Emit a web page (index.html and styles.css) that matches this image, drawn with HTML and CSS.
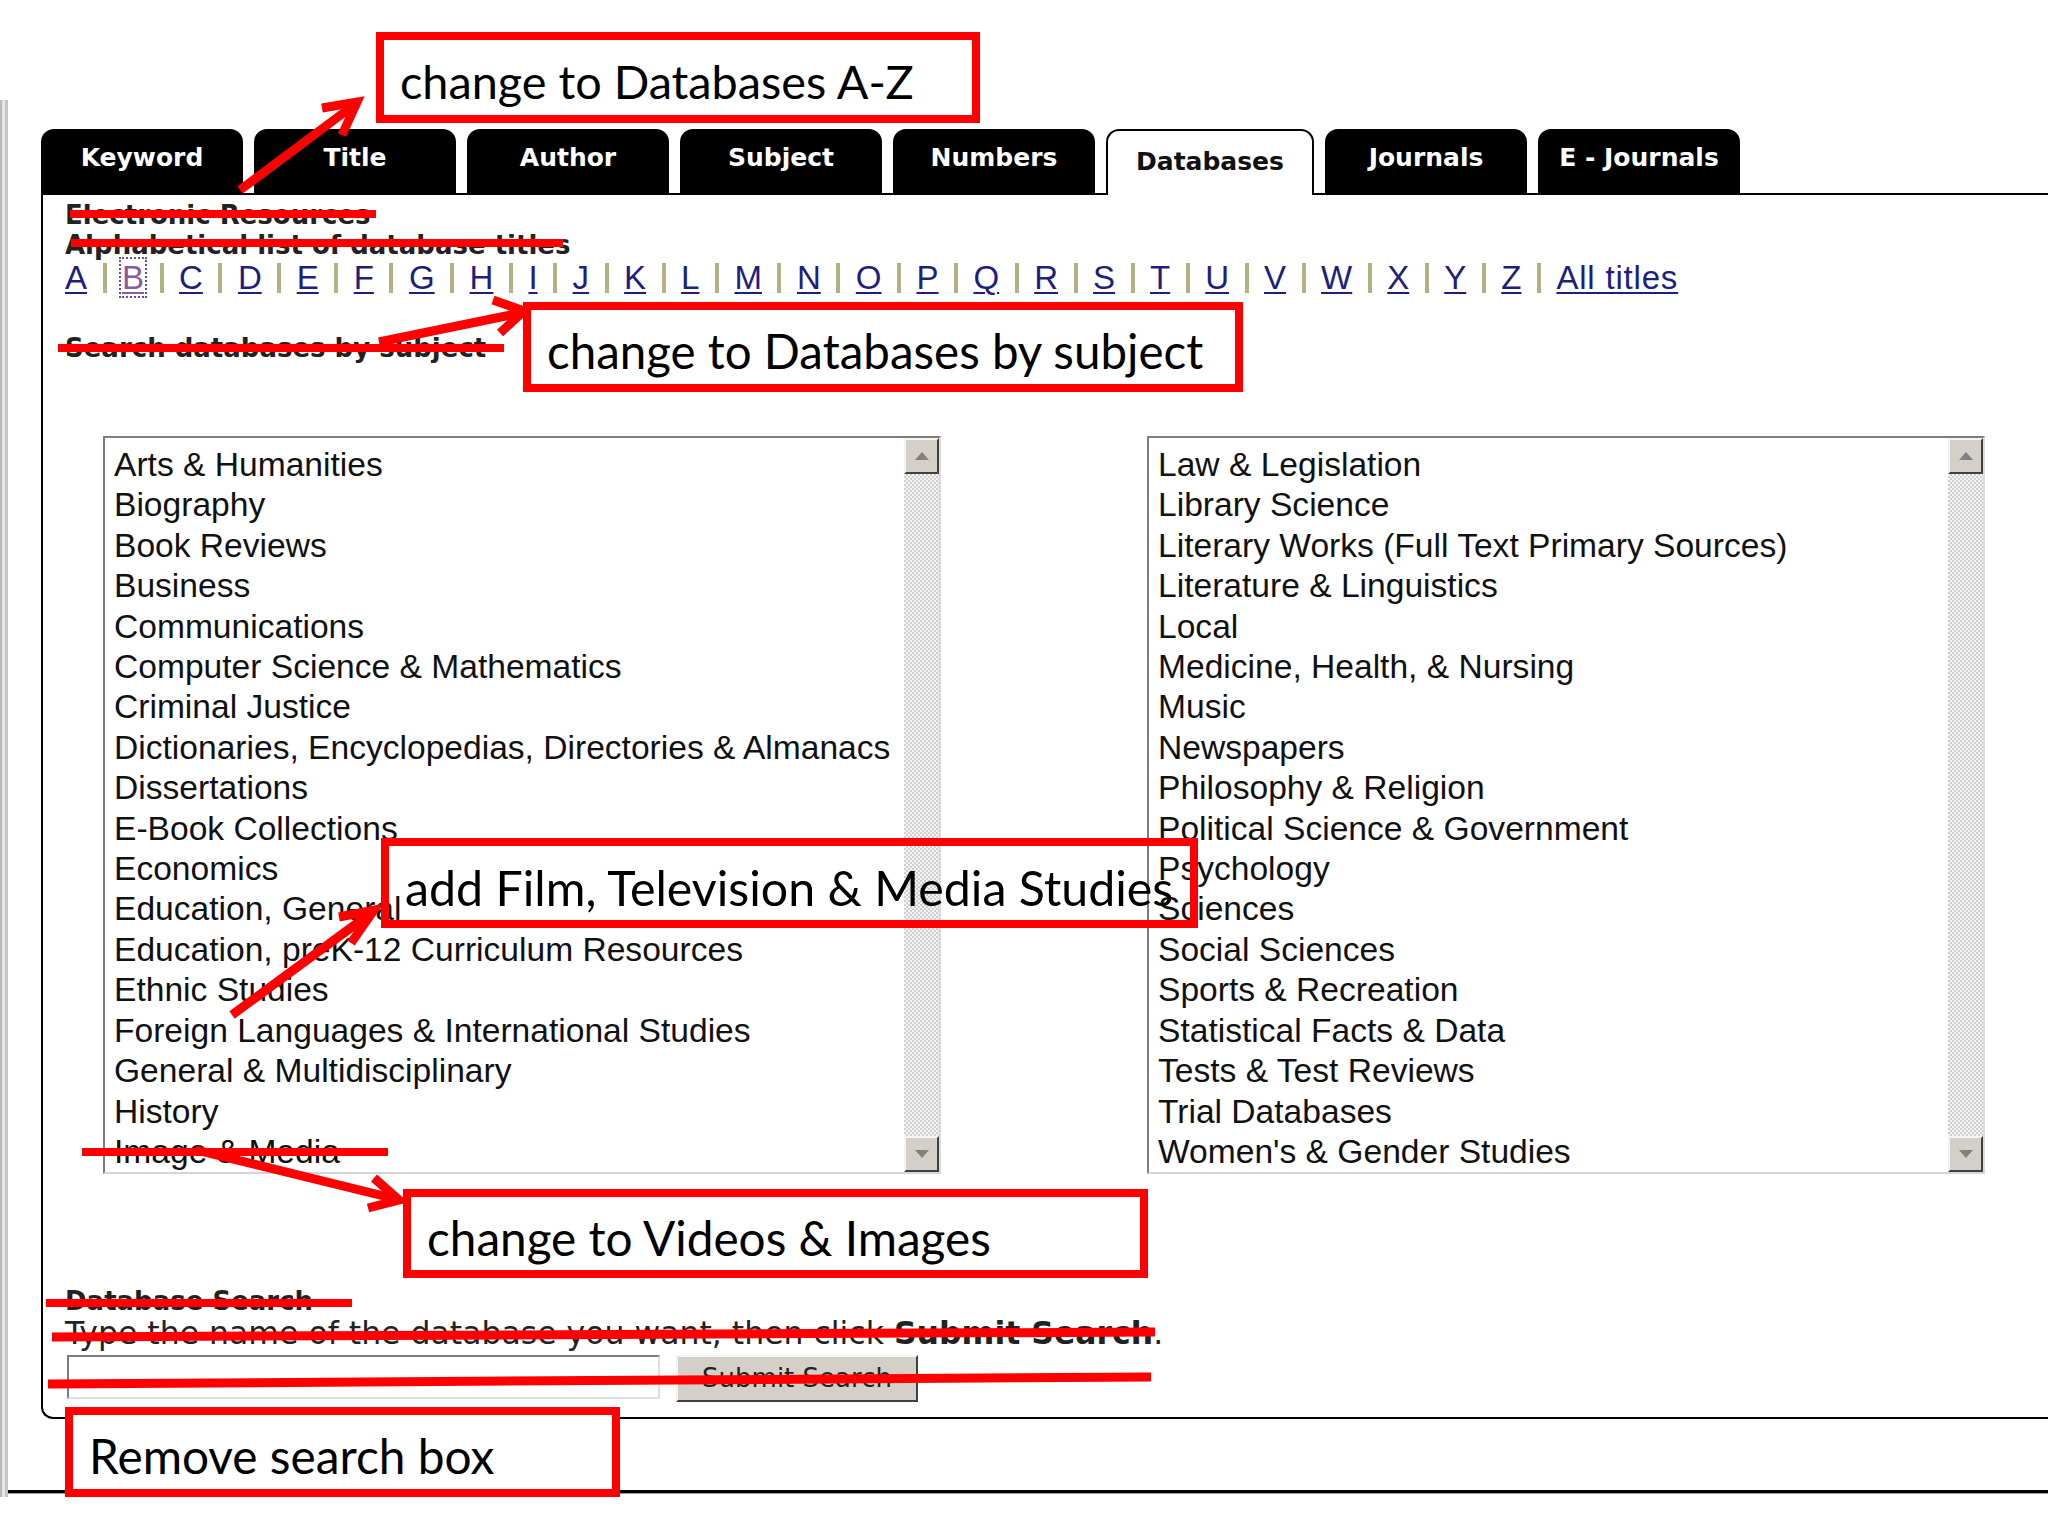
FILE: index.html
```html
<!DOCTYPE html>
<html>
<head>
<meta charset="utf-8">
<link rel="stylesheet" href="styles.css">
</head>
<body>
<div class="page">
  <div class="leftbar"></div>
  <div class="main">
    <div class="tabs">
      <div class="tab">Keyword</div>
      <div class="tab">Title</div>
      <div class="tab">Author</div>
      <div class="tab">Subject</div>
      <div class="tab">Numbers</div>
      <div class="tab active">Databases</div>
      <div class="tab">Journals</div>
      <div class="tab">E - Journals</div>
    </div>
    <div class="panel">
      <div class="hd">Electronic Resources</div>
      <div class="hd">Alphabetical list of database titles</div>
      <div class="letters">
        <a>A</a><span class="sep"></span><a class="visited">B</a><span class="sep"></span><a>C</a><span class="sep"></span><a>D</a><span class="sep"></span><a>E</a><span class="sep"></span><a>F</a><span class="sep"></span><a>G</a><span class="sep"></span><a>H</a><span class="sep"></span><a>I</a><span class="sep"></span><a>J</a><span class="sep"></span><a>K</a><span class="sep"></span><a>L</a><span class="sep"></span><a>M</a><span class="sep"></span><a>N</a><span class="sep"></span><a>O</a><span class="sep"></span><a>P</a><span class="sep"></span><a>Q</a><span class="sep"></span><a>R</a><span class="sep"></span><a>S</a><span class="sep"></span><a>T</a><span class="sep"></span><a>U</a><span class="sep"></span><a>V</a><span class="sep"></span><a>W</a><span class="sep"></span><a>X</a><span class="sep"></span><a>Y</a><span class="sep"></span><a>Z</a><span class="sep"></span><a class="all">All titles</a>
      </div>
      <div class="hd subj">Search databases by subject</div>
      <div class="lists">
        <div class="listbox">
          <ul class="items">
            <li>Arts &amp; Humanities</li>
            <li>Biography</li>
            <li>Book Reviews</li>
            <li>Business</li>
            <li>Communications</li>
            <li>Computer Science &amp; Mathematics</li>
            <li>Criminal Justice</li>
            <li>Dictionaries, Encyclopedias, Directories &amp; Almanacs</li>
            <li>Dissertations</li>
            <li>E-Book Collections</li>
            <li>Economics</li>
            <li>Education, General</li>
            <li>Education, preK-12 Curriculum Resources</li>
            <li>Ethnic Studies</li>
            <li>Foreign Languages &amp; International Studies</li>
            <li>General &amp; Multidisciplinary</li>
            <li>History</li>
            <li>Image &amp; Media</li>
          </ul>
          <div class="scroll">
            <div class="sbtn"><span class="tri up"></span></div>
            <div class="track"></div>
            <div class="sbtn"><span class="tri down"></span></div>
          </div>
        </div>
        <div class="listbox">
          <ul class="items">
            <li>Law &amp; Legislation</li>
            <li>Library Science</li>
            <li>Literary Works (Full Text Primary Sources)</li>
            <li>Literature &amp; Linguistics</li>
            <li>Local</li>
            <li>Medicine, Health, &amp; Nursing</li>
            <li>Music</li>
            <li>Newspapers</li>
            <li>Philosophy &amp; Religion</li>
            <li>Political Science &amp; Government</li>
            <li>Psychology</li>
            <li>Sciences</li>
            <li>Social Sciences</li>
            <li>Sports &amp; Recreation</li>
            <li>Statistical Facts &amp; Data</li>
            <li>Tests &amp; Test Reviews</li>
            <li>Trial Databases</li>
            <li>Women's &amp; Gender Studies</li>
          </ul>
          <div class="scroll">
            <div class="sbtn"><span class="tri up"></span></div>
            <div class="track"></div>
            <div class="sbtn"><span class="tri down"></span></div>
          </div>
        </div>
      </div>
      <div class="hd dbs">Database Search</div>
      <div class="instr">Type the name of the database you want, then click <b>Submit Search</b>.</div>
      <div class="searchrow">
        <div class="input"></div>
        <div class="btn">Submit Search</div>
      </div>
    </div>
    <div class="bottomrule"></div>
  </div>

  <svg class="marks" width="2048" height="1536" viewBox="0 0 2048 1536">
    <g stroke="#ff0000" stroke-width="8" fill="none">
      <line x1="70" y1="214" x2="376" y2="214"/>
      <line x1="71" y1="243" x2="563" y2="243"/>
      <line x1="58" y1="348" x2="504" y2="348"/>
      <line x1="82" y1="1152" x2="388" y2="1152"/>
      <line x1="46" y1="1303" x2="352" y2="1303"/>
      <line x1="52" y1="1337" x2="1155" y2="1332" stroke-width="9"/>
      <line x1="48" y1="1384" x2="1151" y2="1377" stroke-width="9"/>
    </g>
    <g stroke="#ff0000" stroke-width="9" fill="none" stroke-linejoin="miter">
      <line x1="240" y1="190" x2="354" y2="105"/>
      <polyline points="322,108 357,102 342,135"/>
      <line x1="379" y1="342" x2="520" y2="313"/>
      <polyline points="493,300 524,311 500,333"/>
      <line x1="232" y1="1015" x2="371" y2="913"/>
      <polyline points="339,917 374,910 351,943"/>
      <line x1="196" y1="1150" x2="396" y2="1199"/>
      <polyline points="374,1178 399,1200 368,1208"/>
    </g>
  </svg>

  <div class="note n1">change to Databases A-Z</div>
  <div class="note n2">change to Databases by subject</div>
  <div class="note n3">add Film, Television &amp; Media Studies</div>
  <div class="note n4">change to Videos &amp; Images</div>
  <div class="note n5">Remove search box</div>
</div>
</body>
</html>
```

FILE: styles.css
```css
* { box-sizing: border-box; }
body { margin: 0; background: #fff; }

.page {
  position: relative;
  width: 2048px;
  height: 1536px;
  display: flex;
  overflow: hidden;
  background: #fff;
  font-family: "Liberation Sans", Arial, sans-serif;
}

.leftbar {
  flex: none;
  width: 8px;
  height: 1397px;
  margin-top: 100px;
  background: linear-gradient(to right, #b9b9b9 0 2px, #e6e6e6 2px 5px, #c6c6c6 5px 8px);
}

.main {
  flex: 1;
  margin-left: 33px;
  padding-top: 129px;
  display: flex;
  flex-direction: column;
}

/* tabs */
.tabs {
  display: flex;
  gap: 11px;
  height: 64px;
  align-items: stretch;
}
.tab {
  width: 202px;
  background: #000;
  color: #fff;
  border-radius: 13px 13px 0 0;
  font: bold 25px "DejaVu Sans", Verdana, sans-serif;
  display: flex;
  align-items: center;
  justify-content: center;
  padding-bottom: 8px;
}
.tab.active {
  width: 208px;
  background: #fff;
  color: #111;
  border: 2px solid #000;
  border-bottom: none;
  margin-bottom: -2px;
  position: relative;
  z-index: 1;
  padding-bottom: 4px;
}

/* panel */
.panel {
  border-top: 2px solid #000;
  border-left: 2px solid #000;
  border-bottom: 2px solid #000;
  border-bottom-left-radius: 12px;
  padding: 5px 0 15px 22px;
}
.hd {
  font: bold 26px/30px "DejaVu Sans", Verdana, sans-serif;
  color: #222;
  white-space: nowrap;
}
.letters {
  display: flex;
  align-items: center;
  height: 35px;
  font: 33px/35px "Liberation Sans", Arial, sans-serif;
  white-space: nowrap;
}
.letters a {
  color: #1e1e7e;
  text-decoration: underline;
  text-decoration-thickness: 2px;
  text-underline-offset: 3px;
}
.letters a.visited {
  color: #8a5a9c;
  outline: 2px dotted #7a4a90;
  outline-offset: 1px;
}
.letters a.all { letter-spacing: 0.8px; }
.sep {
  flex: none;
  width: 4px;
  height: 30px;
  background: #b2b184;
  margin: 0 15.5px;
}
.subj { margin-top: 38px; }

/* list boxes */
.lists {
  display: flex;
  gap: 206px;
  margin-top: 73px;
  margin-left: 38px;
}
.listbox {
  width: 838px;
  height: 738px;
  display: flex;
  background: #fff;
  border: 2px solid;
  border-color: #7d7d7d #dcdcdc #d6d6d6 #7d7d7d;
}
.items {
  flex: 1;
  list-style: none;
  margin: 0;
  padding: 7px 0 0 9px;
  font: 33.6px/40.4px "Liberation Sans", Arial, sans-serif;
  color: #111;
  white-space: nowrap;
}
.scroll {
  width: 35px;
  display: flex;
  flex-direction: column;
}
.track {
  flex: 1;
  background: repeating-conic-gradient(#cfcfcf 0 25%, #f4f4f4 0 50%) 0 0 / 4px 4px;
}
.sbtn {
  height: 36px;
  background: #d4d0c8;
  border: 2px solid;
  border-color: #f4f4f4 #404040 #404040 #f4f4f4;
  display: flex;
  align-items: center;
  justify-content: center;
}
.tri {
  width: 0;
  height: 0;
  border-left: 7px solid transparent;
  border-right: 7px solid transparent;
}
.tri.up { border-bottom: 8px solid #808080; }
.tri.down { border-top: 8px solid #808080; }

/* search */
.dbs { margin-top: 112px; }
.instr {
  margin-top: 2px;
  font: 31.5px/30px "DejaVu Sans", Verdana, sans-serif;
  color: #222;
  white-space: nowrap;
}
.searchrow {
  display: flex;
  align-items: flex-start;
  margin-top: 7px;
  margin-left: 2px;
}
.input {
  width: 593px;
  height: 44px;
  background: #fff;
  border: 2px solid;
  border-color: #7d7d7d #e0e0e0 #e0e0e0 #7d7d7d;
}
.btn {
  margin-left: 16px;
  width: 242px;
  height: 47px;
  background: #d4d0c8;
  border: 2px solid;
  border-color: #f4f4f4 #404040 #404040 #f4f4f4;
  font: 26px/43px "DejaVu Sans", Verdana, sans-serif;
  color: #222;
  text-align: center;
  white-space: nowrap;
}

.bottomrule {
  height: 4px;
  background: #000;
  margin-top: 71px;
  margin-left: -33px;
  border-bottom: 1px solid #999;
}

/* annotations */
.marks {
  position: absolute;
  left: 0;
  top: 0;
  z-index: 3;
  pointer-events: none;
}
.note {
  position: absolute;
  z-index: 4;
  border: 8px solid #ff0000;
  padding: 5px 0 0 16px;
  font: 47.5px/72px Lato, "Open Sans", sans-serif;
  color: #000;
  white-space: nowrap;
}
.n1 { left: 376px; top: 32px; width: 604px; height: 91px; font-size: 46.8px; }
.n2 { left: 523px; top: 302px; width: 720px; height: 90px; }
.n3 { left: 381px; top: 838px; width: 817px; height: 90px; font-size: 48.3px; }
.n4 { left: 403px; top: 1189px; width: 745px; height: 89px; font-size: 47.7px; }
.n5 { left: 65px; top: 1407px; width: 555px; height: 90px; background: #fff; font-size: 47.8px; }
```
